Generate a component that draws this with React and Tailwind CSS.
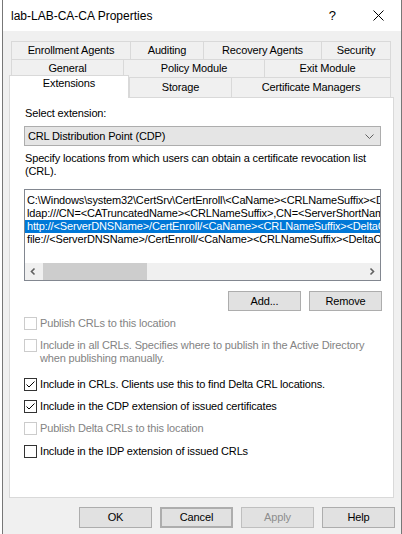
import React from "react";

const rowTop = ["Enrollment Agents", "Auditing", "Recovery Agents", "Security"];
const rowTopW = ["w-[119px]", "w-[73px]", "w-[118px]", "w-[70px]"];
const rowMid = ["General", "Policy Module", "Exit Module"];
const rowMidW = ["w-[112px]", "w-[141px]", "w-[127px]"];

const locations = [
  "C:\\Windows\\system32\\CertSrv\\CertEnroll\\<CaName><CRLNameSuffix><DeltaCRLAllowed>.crl",
  "ldap:///CN=<CATruncatedName><CRLNameSuffix>,CN=<ServerShortName>,CN=CDP,CN=Public Key Services,CN=Services,<ConfigurationContainer><CDPObjectClass>",
  "http://<ServerDNSName>/CertEnroll/<CaName><CRLNameSuffix><DeltaCRLAllowed>.crl",
  "file://<ServerDNSName>/CertEnroll/<CaName><CRLNameSuffix><DeltaCRLAllowed>.crl",
];

function Tab({ label, w, last, h = "h-[18px]" }) {
  return (
    <div
      className={`${w} ${h} border-t border-l ${last ? "border-r" : ""} border-[#d9d9d9] flex items-center justify-center whitespace-nowrap`}
    >
      {label}
    </div>
  );
}

function Check({ checked, disabled, children, className = "" }) {
  return (
    <div className={`flex items-start gap-[3px] pl-[14px] ${className}`}>
      <span
        className={`w-[13px] h-[13px] shrink-0 border bg-white flex items-center justify-center ${
          disabled ? "border-[#cccccc]" : "border-[#333333]"
        }`}
      >
        {checked && (
          <svg width="11" height="11" viewBox="0 0 11 11">
            <path d="M1.5 5.5 L4 8 L9.5 2.5" fill="none" stroke="#000" strokeWidth="1" />
          </svg>
        )}
      </span>
      <span className={`leading-[13px] whitespace-nowrap ${disabled ? "text-[#838383]" : "text-black"}`}>
        {children}
      </span>
    </div>
  );
}

function Btn({ children, className = "" }) {
  return (
    <div
      className={`w-[73px] flex items-center justify-center border border-[#adadad] bg-[#e1e1e1] ${className}`}
    >
      {children}
    </div>
  );
}

export default function App() {
  return (
    <div className="w-[402px] h-[534px] bg-white overflow-hidden font-['Liberation_Sans',Arial,sans-serif] text-[11px] text-black tracking-[-0.15px]">
      <div className="ml-[2px] w-[400px] h-full border-l border-r border-[#777777] bg-[#f0f0f0] flex flex-col">
        {/* ---------- Title bar ---------- */}
        <div className="h-[31px] shrink-0 bg-white flex items-center">
          <span className="pl-[8px] text-[12px] tracking-normal">lab-LAB-CA-CA Properties</span>
          <span className="ml-auto text-[13px] tracking-normal">?</span>
          <svg className="ml-[37px] mr-[17px]" width="11" height="11" viewBox="0 0 11 11">
            <path d="M0.5 0.5 L10.5 10.5 M10.5 0.5 L0.5 10.5" stroke="#000" strokeWidth="1" />
          </svg>
        </div>

        {/* ---------- Tabs ---------- */}
        <div className="ml-[6px] w-[385px] pt-[10px]">
          <div className="flex pl-[2px]">
            {rowTop.map((t, i) => (
              <Tab key={t} label={t} w={rowTopW[i]} last={i === rowTop.length - 1} />
            ))}
          </div>
          <div className="flex pl-[2px]">
            {rowMid.map((t, i) => (
              <Tab key={t} label={t} w={rowMidW[i]} last={i === rowMid.length - 1} />
            ))}
          </div>
          <div className="flex items-end h-[22px] -mt-[2px]">
            <div className="relative z-10 w-[120px] h-[23px] -mb-px bg-white border-t border-l border-r border-[#d9d9d9] flex justify-center pt-[1px] leading-[13px]">
              Extensions
            </div>
            <Tab label="Storage" w="w-[102px]" h="h-[20px]" />
            <Tab label="Certificate Managers" w="w-[160px]" h="h-[20px]" last />
          </div>
        </div>

        {/* ---------- Panel ---------- */}
        <div className="ml-[6px] w-[385px] h-[401px] shrink-0 bg-white border border-[#d9d9d9] pt-[9px]">
          <div className="pl-[15px] leading-[13px]">Select extension:</div>
          <div className="ml-[14px] mt-[6px] w-[357px] h-[20px] border border-[#adadad] bg-[#e5e5e5] flex items-center pl-[3px] pr-[6px]">
            <span>CRL Distribution Point (CDP)</span>
            <svg className="ml-auto" width="9" height="5" viewBox="0 0 9 5">
              <path d="M0.5 0.5 L4.5 4.5 L8.5 0.5" fill="none" stroke="#606060" strokeWidth="1" />
            </svg>
          </div>
          <div className="pl-[15px] mt-[6px] leading-[13px]">
            Specify locations from which users can obtain a certificate revocation list
            <br />
            (CRL).
          </div>

          {/* list */}
          <div className="ml-[14px] mt-[11px] w-[357px] h-[92px] border border-[#828790] flex flex-col">
            <div className="flex-1 overflow-hidden pt-[4px]">
              {locations.map((l, i) => (
                <div
                  key={i}
                  className={`h-[13px] leading-[13px] pl-[2px] whitespace-nowrap ${
                    i === 2 ? "bg-[#0078d7] text-white" : ""
                  }`}
                >
                  {l}
                </div>
              ))}
            </div>
            <div className="h-[17px] shrink-0 bg-[#f0f0f0] flex">
              <div className="w-[17px] flex items-center justify-center">
                <svg width="17" height="17" viewBox="0 0 17 17">
                  <path d="M9.5 5.5 L6.5 8.5 L9.5 11.5" fill="none" stroke="#606060" strokeWidth="1.6" />
                </svg>
              </div>
              <div className="w-[104px] ml-px bg-[#cdcdcd]" />
              <div className="ml-auto w-[17px] flex items-center justify-center">
                <svg width="17" height="17" viewBox="0 0 17 17">
                  <path d="M7.5 5.5 L10.5 8.5 L7.5 11.5" fill="none" stroke="#606060" strokeWidth="1.6" />
                </svg>
              </div>
            </div>
          </div>

          <div className="mt-[10px] h-[20px] flex justify-end gap-[8px] pr-[11px]">
            <Btn>Add...</Btn>
            <Btn>Remove</Btn>
          </div>

          <Check disabled className="mt-[6px]">Publish CRLs to this location</Check>
          <Check disabled className="mt-[9px]">
            Include in all CRLs. Specifies where to publish in the Active Directory
            <br />
            when publishing manually.
          </Check>
          <Check checked className="mt-[13px]">Include in CRLs. Clients use this to find Delta CRL locations.</Check>
          <Check checked className="mt-[9px]">Include in the CDP extension of issued certificates</Check>
          <Check disabled className="mt-[9px]">Publish Delta CRLs to this location</Check>
          <Check className="mt-[10px]">Include in the IDP extension of issued CRLs</Check>
        </div>

        {/* ---------- Dialog buttons ---------- */}
        <div className="mt-[9px] h-[21px] flex justify-end gap-[8px] pr-[6px]">
          <Btn>OK</Btn>
          <Btn className="border-2 border-[#0078d7]">Cancel</Btn>
          <Btn className="bg-[#cccccc] border-[#bfbfbf] text-[#8d8d8d]">Apply</Btn>
          <Btn>Help</Btn>
        </div>
      </div>
    </div>
  );
}
